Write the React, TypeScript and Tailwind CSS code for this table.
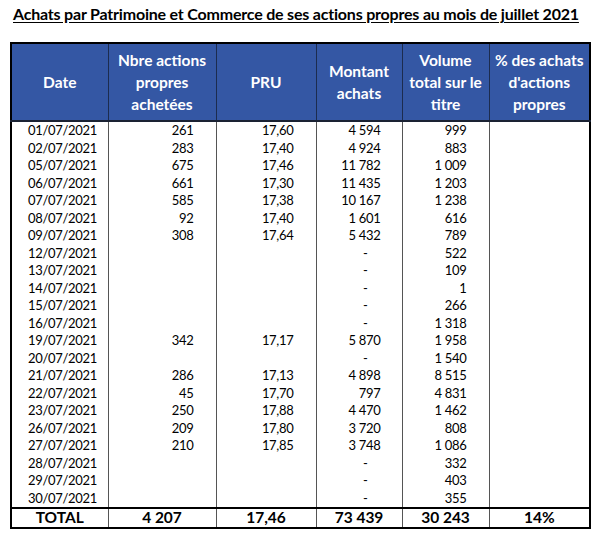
import React from 'react';

type Row = { date: string; nbre: string; pru: string; montant: string; volume: string };

const rows: Row[] = [
  { date: '01/07/2021', nbre: '261', pru: '17,60', montant: '4 594', volume: '999' },
  { date: '02/07/2021', nbre: '283', pru: '17,40', montant: '4 924', volume: '883' },
  { date: '05/07/2021', nbre: '675', pru: '17,46', montant: '11 782', volume: '1 009' },
  { date: '06/07/2021', nbre: '661', pru: '17,30', montant: '11 435', volume: '1 203' },
  { date: '07/07/2021', nbre: '585', pru: '17,38', montant: '10 167', volume: '1 238' },
  { date: '08/07/2021', nbre: '92', pru: '17,40', montant: '1 601', volume: '616' },
  { date: '09/07/2021', nbre: '308', pru: '17,64', montant: '5 432', volume: '789' },
  { date: '12/07/2021', nbre: '', pru: '', montant: '-', volume: '522' },
  { date: '13/07/2021', nbre: '', pru: '', montant: '-', volume: '109' },
  { date: '14/07/2021', nbre: '', pru: '', montant: '-', volume: '1' },
  { date: '15/07/2021', nbre: '', pru: '', montant: '-', volume: '266' },
  { date: '16/07/2021', nbre: '', pru: '', montant: '-', volume: '1 318' },
  { date: '19/07/2021', nbre: '342', pru: '17,17', montant: '5 870', volume: '1 958' },
  { date: '20/07/2021', nbre: '', pru: '', montant: '-', volume: '1 540' },
  { date: '21/07/2021', nbre: '286', pru: '17,13', montant: '4 898', volume: '8 515' },
  { date: '22/07/2021', nbre: '45', pru: '17,70', montant: '797', volume: '4 831' },
  { date: '23/07/2021', nbre: '250', pru: '17,88', montant: '4 470', volume: '1 462' },
  { date: '26/07/2021', nbre: '209', pru: '17,80', montant: '3 720', volume: '808' },
  { date: '27/07/2021', nbre: '210', pru: '17,85', montant: '3 748', volume: '1 086' },
  { date: '28/07/2021', nbre: '', pru: '', montant: '-', volume: '332' },
  { date: '29/07/2021', nbre: '', pru: '', montant: '-', volume: '403' },
  { date: '30/07/2021', nbre: '', pru: '', montant: '-', volume: '355' },
];

const headers = [
  { label: ['Date'], w: 'w-[97px]' },
  { label: ['Nbre actions', 'propres', 'achetées'], w: 'w-[108px]' },
  { label: ['PRU'], w: 'w-[100px]' },
  { label: ['Montant', 'achats'], w: 'w-[86px]' },
  { label: ['Volume', 'total sur le', 'titre'], w: 'w-[87px]' },
  { label: ['% des achats', "d'actions", 'propres'], w: 'w-[101px]' },
];

export default function App() {
  return (
    <div className="w-[600px] h-[537px] bg-white font-['Lato',sans-serif] text-black">
      <h1 className="pt-[4px] pl-[13px] text-[16px] font-bold underline underline-offset-2 tracking-[-0.2px] leading-[20px]">
        Achats par Patrimoine et Commerce de ses actions propres au mois de juillet 2021
      </h1>

      <table className="mt-[18px] ml-[10px] border-collapse border-2 border-black table-fixed">
        <thead>
          <tr className="h-[78px] bg-[#3457a4]">
            {headers.map((h, i) => (
              <th
                key={i}
                className={`${h.w} border border-[#1c2c4f] border-b-2 border-b-[#1a2233] text-white text-[15.5px] font-bold leading-[22px] text-center align-middle`}
              >
                {h.label.map((l) => (
                  <div key={l}>{l}</div>
                ))}
              </th>
            ))}
          </tr>
        </thead>
        <tbody className="text-[13px] leading-[17.5px] tracking-[-0.3px]">
          {rows.map((r) => (
            <tr key={r.date} className="h-[17.5px]">
              <td className="border-x border-[#555] pl-[16px]">{r.date}</td>
              <td className="border-x border-[#555] text-right pr-[22px]">{r.nbre}</td>
              <td className="border-x border-[#555] text-right pr-[22px]">{r.pru}</td>
              <td className={`border-x border-[#555] text-right ${r.montant === '-' ? 'pr-[34px]' : 'pr-[21px]'}`}>
                {r.montant}
              </td>
              <td className="border-x border-[#555] text-right pr-[22px]">{r.volume}</td>
              <td className="border-x border-[#555]"></td>
            </tr>
          ))}
          <tr className="h-[20px] border-t-2 border-black text-[15.5px] font-bold text-center tracking-normal">
            <td className="border-x border-[#555]">TOTAL</td>
            <td className="border-x border-[#555]">4 207</td>
            <td className="border-x border-[#555]">17,46</td>
            <td className="border-x border-[#555]">73 439</td>
            <td className="border-x border-[#555]">30 243</td>
            <td className="border-x border-[#555]">14%</td>
          </tr>
        </tbody>
      </table>
    </div>
  );
}
